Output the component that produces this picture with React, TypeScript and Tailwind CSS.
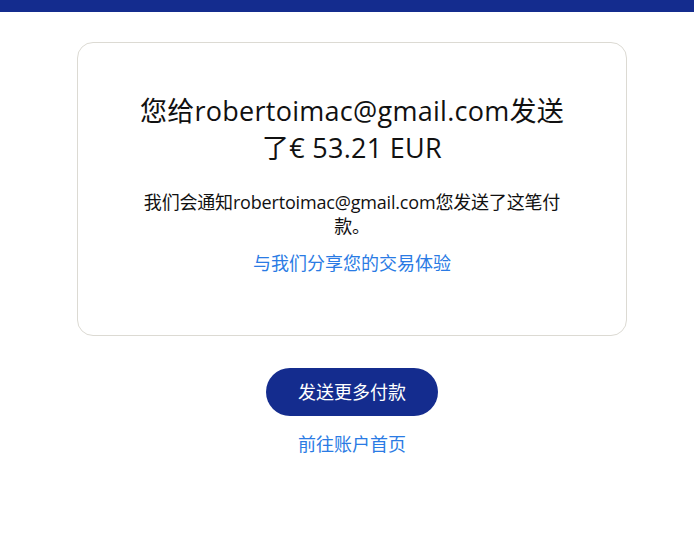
export default function App() {
  const font = { fontFamily: '"Open Sans", "Noto Sans CJK SC", sans-serif' };
  return (
    <div className="min-h-[559px] w-full bg-white" style={font}>
      <div className="h-[12px] w-full bg-[#142c8e]" />
      <div className="flex flex-col items-center pt-[30px] pl-[10px]">
        <div className="w-[550px] rounded-[16px] border border-[#dcdad3] px-[60px] pt-[49px] pb-[60px] text-center">
          <h1 className="text-[27px] leading-[37px] tracking-[0.01em] text-[#111]">
            您给robertoimac@gmail.com发送了€ 53.21 EUR
          </h1>
          <p className="mt-[24px] text-[18px] leading-[24px] tracking-[-0.01em] text-[#111]">
            我们会通知robertoimac@gmail.com您发送了这笔付款。
          </p>
          <a className="mt-[13px] block text-[18px] leading-[24px] text-[#2a7be4]">
            与我们分享您的交易体验
          </a>
        </div>
        <button className="mt-[32px] flex h-[48px] w-[172px] items-center justify-center rounded-full bg-[#142c8e] text-[18px] text-white">
          发送更多付款
        </button>
        <a className="mt-[16px] block text-[18px] leading-[24px] text-[#2a7be4]">前往账户首页</a>
      </div>
    </div>
  );
}
